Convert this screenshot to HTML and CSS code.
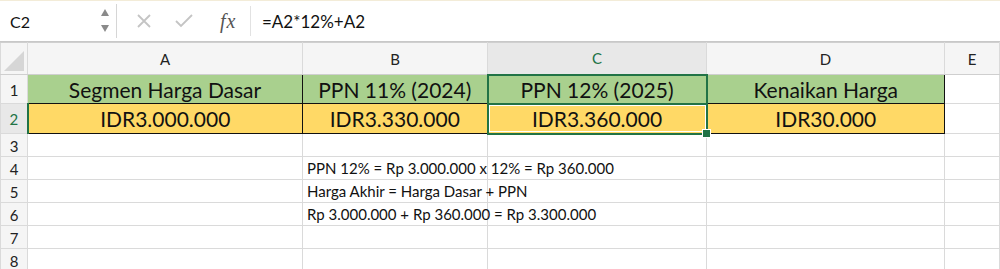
FILE: index.html
```html
<!DOCTYPE html>
<html>
<head>
	<title>Sheet</title>
	<link rel="stylesheet" href="styles.css">
</head>
<body>
	<div class="formula-bar">
		<div class="name-box">C2</div>
		<div class="arrows">
			<svg width="10" height="28" viewBox="0 0 10 28">
				<path d="M1 9 L5 2 L9 9 Z" fill="#8a8a8a"/>
				<path d="M1 18 L5 25 L9 18 Z" fill="#8a8a8a"/>
			</svg>
		</div>
		<div class="tools">
			<svg class="icon" width="16" height="16" viewBox="0 0 16 16">
				<path d="M2 2 L14 14 M14 2 L2 14" stroke="#c4c4c4" stroke-width="1.8" fill="none"/>
			</svg>
			<svg class="icon" width="20" height="16" viewBox="0 0 20 16">
				<path d="M2 8 L7 13 L18 2" stroke="#c4c4c4" stroke-width="1.8" fill="none"/>
			</svg>
			<span class="fx">fx</span>
		</div>
		<div class="formula">=A2*12%+A2</div>
	</div>

	<table class="sheet">
		<colgroup>
			<col style="width:27px">
			<col style="width:275px">
			<col style="width:185px">
			<col style="width:219px">
			<col style="width:238px">
			<col>
		</colgroup>
		<tr class="col-head">
			<th class="corner"><span class="tri"></span></th>
			<th>A</th>
			<th>B</th>
			<th class="sel">C</th>
			<th>D</th>
			<th>E</th>
		</tr>
		<tr class="r1">
			<th>1</th>
			<td class="head">Segmen Harga Dasar</td>
			<td class="head">PPN 11% (2024)</td>
			<td class="head pick">PPN 12% (2025)</td>
			<td class="head">Kenaikan Harga</td>
			<td></td>
		</tr>
		<tr class="r2">
			<th class="sel">2</th>
			<td class="val">IDR3.000.000</td>
			<td class="val">IDR3.330.000</td>
			<td class="val pick active"><span class="inner">IDR3.360.000</span><span class="handle"></span></td>
			<td class="val">IDR30.000</td>
			<td></td>
		</tr>
		<tr class="rs"><th>3</th><td></td><td></td><td></td><td></td><td></td></tr>
		<tr class="rs"><th>4</th><td></td><td class="note">PPN 12% = Rp 3.000.000 x 12% = Rp 360.000</td><td></td><td></td><td></td></tr>
		<tr class="rs"><th>5</th><td></td><td class="note">Harga Akhir = Harga Dasar + PPN</td><td></td><td></td><td></td></tr>
		<tr class="rs"><th>6</th><td></td><td class="note">Rp 3.000.000 + Rp 360.000 = Rp 3.300.000</td><td></td><td></td><td></td></tr>
		<tr class="rs"><th>7</th><td></td><td></td><td></td><td></td><td></td></tr>
		<tr class="rs"><th>8</th><td></td><td></td><td></td><td></td><td></td></tr>
	</table>
</body>
</html>
```

FILE: styles.css
```css
body {
	margin: 0;
	background-color: #fff;
	font-family: Lato, "Open Sans", sans-serif;
	color: #111;
	overflow: hidden;
}

.formula-bar {
	display: flex;
	align-items: center;
	height: 40px;
	border-top: 1px solid #f3ecd8;
	border-bottom: 1px solid #c8c8c8;
	box-sizing: content-box;
}

.name-box {
	width: 90px;
	padding-left: 10px;
	font-size: 16px;
}

.arrows {
	width: 16px;
	display: flex;
	align-items: center;
	border-right: 1px solid #d6d6d6;
	height: 34px;
}

.tools {
	display: flex;
	align-items: center;
	height: 30px;
	padding-left: 19px;
	width: 114px;
	border-right: 1px solid #e2e2e2;
}

.tools .icon {
	margin-right: 22px;
}

.tools .icon + .icon {
	margin-right: 26px;
}

.fx {
	font-family: "Liberation Serif", serif;
	font-style: italic;
	font-size: 20px;
	color: #555;
	letter-spacing: 1px;
}

.formula {
	padding-left: 11px;
	font-size: 17px;
}

.sheet {
	border-collapse: collapse;
	table-layout: fixed;
	width: 1000px;
}

.sheet th,
.sheet td {
	border: 1px solid #dadada;
	padding: 0;
	white-space: nowrap;
	overflow: visible;
	line-height: 18px;
}

.sheet th {
	background-color: #f5f5f5;
	font-weight: normal;
	font-size: 15px;
	color: #222;
}

.col-head th {
	height: 30px;
	border-top: 1px solid #cfcfcf;
	border-bottom: 1px solid #cfcfcf;
}

.col-head th.sel {
	color: #217346;
	background-color: #e8e8e8;
}

.corner {
	position: relative;
}

.tri {
	position: absolute;
	right: 3px;
	bottom: 3px;
	width: 0;
	height: 0;
	border-left: 20px solid transparent;
	border-bottom: 20px solid #d6d6d6;
}

.sheet tr > th:first-child {
	text-align: center;
	padding-top: 1px;
}

.r1 td,
.r1 th {
	height: 27px;
}

.r2 td,
.r2 th {
	height: 28px;
}

.rs td,
.rs th {
	height: 21px;
}

.r2 th.sel {
	color: #217346;
	background-color: #e8e8e8;
	border-right: 2px solid #217346;
}

.head {
	background-color: #a9d08e;
	border: 1px solid #111 !important;
	text-align: center;
	font-size: 21px;
	line-height: 25px !important;
}

.val {
	background-color: #ffd966;
	border: 1px solid #111 !important;
	text-align: center;
	font-size: 21px;
	line-height: 25px !important;
}

.sheet td.pick {
	border: 2px solid #217346 !important;
}

.active {
	position: relative;
}

.inner {
	display: block;
	border: 1px solid #fff;
	line-height: 25px;
}

.handle {
	position: absolute;
	right: -5px;
	bottom: -5px;
	width: 7px;
	height: 7px;
	background-color: #217346;
	border: 1px solid #fff;
}

.note {
	font-size: 15px;
	padding-left: 4px !important;
	overflow: visible;
}
```
